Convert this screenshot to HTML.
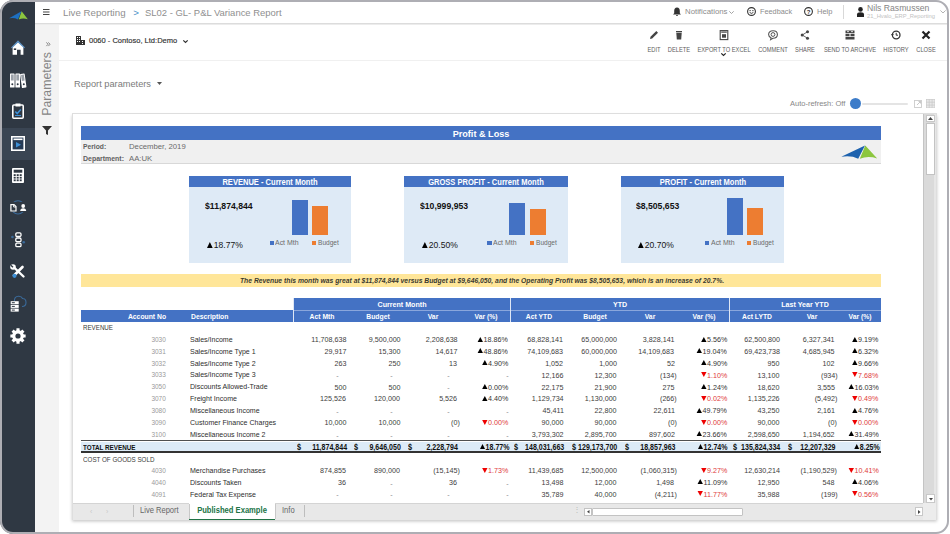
<!DOCTYPE html>
<html><head><meta charset="utf-8"><style>
html,body{margin:0;padding:0;width:950px;height:534px;overflow:hidden;background:#fff;font-family:"Liberation Sans", sans-serif;}
.t{position:absolute;white-space:nowrap;line-height:1;}
.b{position:absolute;}
svg{position:absolute;overflow:visible;}
#frame{position:absolute;left:0;top:0;width:949px;height:534px;border-radius:14px;overflow:hidden;background:#fff;}
#frameb{position:absolute;left:0px;top:-0.3px;width:949.4px;height:534.5px;border-radius:13px;border:2.1px solid #aeaeb4;box-sizing:border-box;}
</style></head><body>
<div id="frame">

<div class="b" style="left:0px;top:0px;width:35px;height:540px;background:#2f3843;"></div>
<div class="b" style="left:0px;top:128px;width:35px;height:32px;background:#3a4553;"></div>
<svg style="left:9.3px;top:10.6px" width="19" height="9" viewBox="0 0 19 9"><g transform="scale(0.52,0.62)"><path d="M0.3,11.8 L24,0.5 L17.2,13.7 Q10,10.2 0.3,11.8 Z" fill="#1d6fc0"/><path d="M18.8,13.7 L24.3,0.6 L36.2,13.4 Q27,10.5 18.8,13.7 Z" fill="#8cc63f"/></g></svg>
<svg style="left:11px;top:40px" width="14" height="16" viewBox="0 0 14 16"><polygon points="7,0.6 0.6,7.2 13.4,7.2" fill="#5b8dbd"/><path d="M1.6,6.6 L7,2.2 L12.4,6.6 V14.8 H9.6 V9.8 H6 V14.8 H1.6 Z" fill="#ffffff"/><rect x="2.8" y="8.4" width="2.4" height="1.6" fill="#2f3843"/><polygon points="7,0.6 0,7.4 0.9,8.2 7,2.6 13.1,8.2 14,7.4" fill="#5b8dbd"/></svg>
<svg style="left:10px;top:72.5px" width="17" height="15" viewBox="0 0 17 15"><rect x="0" y="0.5" width="4.6" height="14" rx="0.6" fill="#ffffff"/><rect x="5.4" y="0.5" width="4.6" height="14" rx="0.6" fill="#ffffff"/><g transform="rotate(-8 13 8)"><rect x="11" y="0.8" width="4.6" height="14" rx="0.6" fill="#ffffff"/></g><rect x="0.9" y="1.5" width="2.8" height="6" fill="#9aa0a8"/><rect x="6.3" y="1.5" width="2.8" height="6" fill="#9aa0a8"/><g transform="rotate(-8 13 8)"><rect x="11.9" y="1.8" width="2.8" height="6" fill="#9aa0a8"/></g><circle cx="2.3" cy="11.2" r="1" fill="#2f3843"/><circle cx="7.7" cy="11.2" r="1" fill="#2f3843"/><circle cx="13.8" cy="11.2" r="1" fill="#2f3843"/></svg>
<svg style="left:12px;top:103px" width="12" height="16" viewBox="0 0 12 16"><rect x="0.8" y="2" width="10.4" height="13.2" rx="1" fill="none" stroke="#ffffff" stroke-width="1.6"/><rect x="3.5" y="0.5" width="5" height="3" fill="#ffffff"/><path d="M3.3,8.5 L5.2,10.6 L8.8,6.5" fill="none" stroke="#3d8fd6" stroke-width="1.5"/><rect x="3" y="12" width="6" height="1" fill="#3d8fd6"/></svg>
<svg style="left:11px;top:136px" width="14" height="15" viewBox="0 0 14 15"><rect x="0.8" y="0.8" width="12.4" height="13.4" fill="#253a55" stroke="#ffffff" stroke-width="1.6"/><rect x="2.5" y="2.5" width="9" height="1.6" fill="#ffffff"/><polygon points="5,6 10,8.8 5,11.6" fill="#3d8fd6"/></svg>
<svg style="left:12px;top:168px" width="12" height="15" viewBox="0 0 12 15"><rect x="0" y="0" width="12" height="15" rx="1" fill="#ffffff"/><rect x="1.7" y="1.7" width="8.6" height="3" fill="#2f3843"/><rect x="1.7" y="6.2" width="2" height="1.8" fill="#2f3843"/><rect x="4.7" y="6.2" width="2" height="1.8" fill="#2f3843"/><rect x="7.7" y="6.2" width="2" height="1.8" fill="#2f3843"/><rect x="1.7" y="8.8" width="2" height="1.8" fill="#2f3843"/><rect x="4.7" y="8.8" width="2" height="1.8" fill="#2f3843"/><rect x="7.7" y="8.8" width="2" height="1.8" fill="#2f3843"/><rect x="1.7" y="11.4" width="2" height="1.8" fill="#2f3843"/><rect x="4.7" y="11.4" width="2" height="1.8" fill="#2f3843"/><rect x="7.7" y="11.4" width="2" height="1.8" fill="#2f3843"/></svg>
<svg style="left:8px;top:199px" width="20" height="17" viewBox="0 0 20 17"><circle cx="10" cy="8.4" r="6.6" fill="none" stroke="#3a6a9a" stroke-width="1.1"/><rect x="1" y="3" width="18" height="10" fill="#2f3843"/><path d="M2.9,5.6 H6 L8,7.6 V12 H2.9 Z" fill="none" stroke="#ffffff" stroke-width="1.2"/><path d="M5.6,5.6 V8 H8" fill="none" stroke="#ffffff" stroke-width="0.9"/><circle cx="15.2" cy="7" r="1.9" fill="#ffffff"/><path d="M12.2,12.1 Q12.2,9.2 15.2,9.2 Q18.2,9.2 18.2,12.1 Z" fill="#ffffff"/></svg>
<svg style="left:11px;top:232px" width="14" height="16" viewBox="0 0 14 16"><circle cx="1.4" cy="5" r="1.3" fill="#3a6a9a"/><circle cx="12.7" cy="10.2" r="1.3" fill="#3a6a9a"/><rect x="4.8" y="0.9" width="5.2" height="3.6" rx="1.2" fill="#2f3843" stroke="#ffffff" stroke-width="1.3"/><rect x="4.8" y="6" width="5.2" height="3.6" rx="1.2" fill="#2f3843" stroke="#ffffff" stroke-width="1.3"/><rect x="4.8" y="11.1" width="5.2" height="3.6" rx="1.2" fill="#2f3843" stroke="#ffffff" stroke-width="1.3"/></svg>
<svg style="left:9.5px;top:264px" width="17" height="15" viewBox="0 0 17 15"><path d="M4,11.5 L12.5,3" stroke="#ffffff" stroke-width="2.6" stroke-linecap="round"/><path d="M3,2.5 L13.5,12.5" stroke="#ffffff" stroke-width="2.4" stroke-linecap="round"/><circle cx="3" cy="3" r="2.8" fill="#ffffff"/><path d="M0.8,1.2 L3,3.2" stroke="#2f3843" stroke-width="1.4"/><circle cx="4.5" cy="11.8" r="2.1" fill="#3d8fd6"/></svg>
<svg style="left:10px;top:295px" width="17" height="18" viewBox="0 0 17 18"><path d="M4.5,6 Q4,1.5 8.5,1.2 Q11.5,1 12.5,3.5 Q16,3.5 16,7.5 Q16,11.5 12,11.5" fill="none" stroke="#3a6a9a" stroke-width="1.1"/><rect x="0.7" y="6" width="8.5" height="6.5" fill="#2f3843"/><rect x="0.7" y="6.2" width="8" height="3" fill="#ffffff"/><rect x="0.7" y="9.9" width="8" height="3" fill="#ffffff"/><rect x="0.7" y="13.6" width="8" height="3" fill="#ffffff"/><rect x="1.8" y="7.2" width="3" height="1" fill="#2f3843"/><rect x="1.8" y="10.9" width="3" height="1" fill="#2f3843"/><rect x="1.8" y="14.6" width="3" height="1" fill="#2f3843"/></svg>
<svg style="left:10.2px;top:328px" width="16" height="16" viewBox="0 0 16 16"><polygon points="13.38,6.45 15.64,6.45 15.64,9.55 13.38,9.55 12.90,10.71 14.50,12.31 12.31,14.50 10.71,12.90 9.55,13.38 9.55,15.64 6.45,15.64 6.45,13.38 5.29,12.90 3.69,14.50 1.50,12.31 3.10,10.71 2.62,9.55 0.36,9.55 0.36,6.45 2.62,6.45 3.10,5.29 1.50,3.69 3.69,1.50 5.29,3.10 6.45,2.62 6.45,0.36 9.55,0.36 9.55,2.62 10.71,3.10 12.31,1.50 14.50,3.69 12.90,5.29" fill="#ffffff"/><circle cx="8" cy="8" r="5.8" fill="#ffffff"/><circle cx="8" cy="8" r="2.6" fill="#2f3843"/></svg>
<div class="b" style="left:35px;top:24px;width:24px;height:520px;background:#f3f3f3;"></div>
<svg style="left:45.5px;top:41.5px" width="4.5" height="4.5" viewBox="0 0 4.5 4.5"><path d="M0.4,0.4 L2,2.25 L0.4,4.1 M2.4,0.4 L4,2.25 L2.4,4.1" fill="none" stroke="#888" stroke-width="1"/></svg>
<div class="t" style="left:47px;top:84px;font-size:12.3px;color:#858585;transform:translate(-50%,-50%) rotate(-90deg);transform-origin:50% 50%;">Parameters</div>
<svg style="left:42px;top:126px" width="10" height="9" viewBox="0 0 10 9"><path d="M0,0 H10 L6,4.5 V9 L4,8 V4.5 Z" fill="#333"/></svg>
<div class="b" style="left:35px;top:0px;width:913px;height:23px;background:#fff;"></div>
<div class="b" style="left:35px;top:23px;width:913px;height:1px;background:#dcdcdc;"></div>
<div class="b" style="left:35px;top:24px;width:913px;height:1px;background:#ececec;"></div>
<svg style="left:42.5px;top:8.5px" width="6.5" height="6" viewBox="0 0 6.5 6"><rect x="0" y="0" width="6.5" height="1" fill="#444"/><rect x="0" y="2.5" width="6.5" height="1" fill="#444"/><rect x="0" y="5" width="6.5" height="1" fill="#444"/></svg>
<div class="t" style="left:63.4px;top:7.6px;font-size:9.8px;color:#8f8f8f;transform:scaleX(0.99);transform-origin:left 50%;">Live Reporting</div>
<div class="t" style="left:133.3px;top:7.6px;font-size:9.7px;color:#4a90c8;">&gt;</div>
<div class="t" style="left:145.3px;top:7.6px;font-size:9.8px;color:#8f8f8f;transform:scaleX(0.965);transform-origin:left 50%;">SL02 - GL- P&amp;L Variance Report</div>
<svg style="left:673px;top:7px" width="8" height="9" viewBox="0 0 8 9"><path d="M4,0.5 Q6.8,0.8 6.8,4 V6.3 L8,7.5 H0 L1.2,6.3 V4 Q1.2,0.8 4,0.5 Z M3,8 H5 Q5,9 4,9 Q3,9 3,8Z" fill="#333"/></svg>
<div class="t" style="left:685px;top:8px;font-size:7.8px;color:#8c8c8c;">Notifications</div>
<svg style="left:729px;top:11px" width="5" height="3" viewBox="0 0 5 3"><path d="M0.3,0.3 L2.5,2.5 L4.7,0.3" fill="none" stroke="#999" stroke-width="0.9"/></svg>
<svg style="left:747px;top:7px" width="9" height="9" viewBox="0 0 9 9"><circle cx="4.5" cy="4.5" r="3.9" fill="none" stroke="#333" stroke-width="1.1"/><circle cx="3.1" cy="3.6" r="0.7" fill="#333"/><circle cx="5.9" cy="3.6" r="0.7" fill="#333"/><path d="M2.6,5.4 Q4.5,7.4 6.4,5.4" fill="none" stroke="#333" stroke-width="0.9"/></svg>
<div class="t" style="left:760px;top:8px;font-size:7.3px;color:#8c8c8c;">Feedback</div>
<svg style="left:804px;top:7px" width="9" height="9" viewBox="0 0 9 9"><circle cx="4.5" cy="4.5" r="3.9" fill="none" stroke="#333" stroke-width="1.1"/><text x="4.5" y="7" font-size="6" font-weight="bold" text-anchor="middle" fill="#333" font-family="Liberation Sans">?</text></svg>
<div class="t" style="left:817px;top:8px;font-size:7.5px;color:#8c8c8c;">Help</div>
<div class="b" style="left:843px;top:5px;width:1px;height:14px;background:#d8d8d8;"></div>
<svg style="left:857px;top:7px" width="7" height="10" viewBox="0 0 7 10"><circle cx="3.5" cy="2.4" r="2.3" fill="#222"/><path d="M0,10 V7.5 Q0,5.2 3.5,5.2 Q7,5.2 7,7.5 V10 Z" fill="#222"/></svg>
<div class="t" style="left:867px;top:4.3px;font-size:9.0px;color:#868686;transform:scaleX(0.96);transform-origin:left 50%;">Nils Rasmussen</div>
<div class="t" style="left:867px;top:14.2px;font-size:5.8px;color:#c2c2c2;">21_Hvalo_ERP_Reporting</div>
<svg style="left:940px;top:10px" width="6" height="4" viewBox="0 0 6 4"><path d="M0.4,0.4 L3,3 L5.6,0.4" fill="none" stroke="#aaa" stroke-width="0.9"/></svg>
<svg style="left:76px;top:36px" width="9" height="9" viewBox="0 0 9 9"><rect x="0" y="0" width="5" height="9" fill="#333"/><rect x="5" y="4" width="4" height="5" fill="#333"/><rect x="1" y="1" width="1" height="1" fill="#fff"/><rect x="3" y="1" width="1" height="1" fill="#fff"/><rect x="1" y="3" width="1" height="1" fill="#fff"/><rect x="3" y="3" width="1" height="1" fill="#fff"/><rect x="1" y="5" width="1" height="1" fill="#fff"/><rect x="3" y="5" width="1" height="1" fill="#fff"/><rect x="6" y="5" width="1" height="1" fill="#fff"/><rect x="6" y="7" width="1" height="1" fill="#fff"/></svg>
<div class="t" style="left:89.2px;top:36.6px;font-size:8.0px;color:#303030;transform:scaleX(0.94);transform-origin:left 50%;-webkit-text-stroke:0.15px #303030;">0060 - Contoso, Ltd:Demo</div>
<svg style="left:183px;top:40px" width="5" height="3" viewBox="0 0 5 3"><path d="M0.3,0.3 L2.5,2.5 L4.7,0.3" fill="none" stroke="#333" stroke-width="1.2"/></svg>
<svg style="left:649.0px;top:30px" width="10" height="10" viewBox="0 0 10 10"><path d="M1,9 L1.5,6.8 L7.3,1 L9,2.7 L3.2,8.5 Z" fill="#444"/></svg>
<div class="t" style="left:354px;width:600px;text-align:center;top:46.3px;font-size:7.0px;color:#606060;transform:scaleX(0.82);transform-origin:center 50%;">EDIT</div>
<svg style="left:674.0px;top:30px" width="10" height="10" viewBox="0 0 10 10"><rect x="2" y="1" width="6" height="1.2" fill="#444"/><path d="M2.3,2.8 H7.7 L7.2,9.5 H2.8 Z" fill="#444"/></svg>
<div class="t" style="left:379px;width:600px;text-align:center;top:46.3px;font-size:7.0px;color:#606060;transform:scaleX(0.82);transform-origin:center 50%;">DELETE</div>
<svg style="left:718.5px;top:30px" width="10" height="10" viewBox="0 0 10 10"><rect x="1.2" y="0.6" width="7.6" height="9" fill="none" stroke="#444" stroke-width="1.1"/><rect x="2.2" y="1.5" width="5.6" height="1.2" fill="#444"/><rect x="3" y="4.2" width="4" height="3.5" fill="#444"/></svg>
<div class="t" style="left:423.5px;width:600px;text-align:center;top:46.3px;font-size:7.0px;color:#606060;transform:scaleX(0.82);transform-origin:center 50%;">EXPORT TO EXCEL</div>
<svg style="left:721px;top:52.8px" width="5" height="3" viewBox="0 0 5 3"><path d="M0.3,0.3 L2.5,2.5 L4.7,0.3" fill="none" stroke="#222" stroke-width="1.2"/></svg>
<svg style="left:768.0px;top:30px" width="10" height="10" viewBox="0 0 10 10"><path d="M5,0.8 C8,0.8 9.4,2.6 9.4,4.5 C9.4,6.6 7.6,8.2 5,8.2 L2.6,9.6 L3,7.8 C1.6,7.1 0.6,6 0.6,4.5 C0.6,2.6 2,0.8 5,0.8 Z" fill="none" stroke="#555" stroke-width="1.1"/><circle cx="5" cy="4.5" r="1.9" fill="none" stroke="#555" stroke-width="1"/></svg>
<div class="t" style="left:473px;width:600px;text-align:center;top:46.3px;font-size:7.0px;color:#606060;transform:scaleX(0.82);transform-origin:center 50%;">COMMENT</div>
<svg style="left:800.0px;top:30px" width="10" height="10" viewBox="0 0 10 10"><circle cx="7.5" cy="1.8" r="1.5" fill="#444"/><circle cx="2.2" cy="5" r="1.5" fill="#444"/><circle cx="7.5" cy="8.2" r="1.5" fill="#444"/><path d="M7.5,1.8 L2.2,5 L7.5,8.2" fill="none" stroke="#444" stroke-width="0.8"/></svg>
<div class="t" style="left:505px;width:600px;text-align:center;top:46.3px;font-size:7.0px;color:#606060;transform:scaleX(0.82);transform-origin:center 50%;">SHARE</div>
<svg style="left:844.5px;top:30px" width="10" height="10" viewBox="0 0 10 10"><rect x="0.5" y="0.5" width="9" height="2.5" fill="#444"/><rect x="0.5" y="3.7" width="4" height="2.5" fill="#444"/><rect x="5.5" y="3.7" width="4" height="2.5" fill="#444"/><rect x="0.5" y="6.9" width="9" height="2.6" fill="#444"/><rect x="2" y="1.3" width="2" height="0.8" fill="#fff"/><rect x="6" y="1.3" width="2" height="0.8" fill="#fff"/></svg>
<div class="t" style="left:549.5px;width:600px;text-align:center;top:46.3px;font-size:7.0px;color:#606060;transform:scaleX(0.82);transform-origin:center 50%;">SEND TO ARCHIVE</div>
<svg style="left:891.0px;top:30px" width="10" height="10" viewBox="0 0 10 10"><circle cx="5.2" cy="5" r="3.8" fill="none" stroke="#333" stroke-width="1.3"/><path d="M5.2,2.8 V5.2 H7" fill="none" stroke="#333" stroke-width="1"/><polygon points="0,4 2.8,4 1.4,6.2" fill="#333"/></svg>
<div class="t" style="left:596px;width:600px;text-align:center;top:46.3px;font-size:7.0px;color:#606060;transform:scaleX(0.82);transform-origin:center 50%;">HISTORY</div>
<svg style="left:920.5px;top:30px" width="10" height="10" viewBox="0 0 10 10"><path d="M1.5,1.5 L8.5,8.5 M8.5,1.5 L1.5,8.5" stroke="#222" stroke-width="2.2"/></svg>
<div class="t" style="left:625.5px;width:600px;text-align:center;top:46.3px;font-size:7.0px;color:#606060;transform:scaleX(0.82);transform-origin:center 50%;">CLOSE</div>
<div class="b" style="left:59px;top:60px;width:889px;height:1px;background:#f0f0f0;"></div>
<div class="t" style="left:74.4px;top:78.9px;font-size:9.4px;color:#7b7b7b;transform:scaleX(0.985);transform-origin:left 50%;">Report parameters</div>
<svg style="left:157px;top:82px" width="5" height="3" viewBox="0 0 5 3"><polygon points="0,0 5,0 2.5,3" fill="#555"/></svg>
<div class="t" style="left:790px;top:99.5px;font-size:7.5px;color:#888;">Auto-refresh: Off</div>
<div class="b" style="left:862px;top:102.5px;width:46px;height:2px;background:#e4e4e4;border-radius:1px;"></div>
<div class="b" style="left:849.5px;top:97.5px;width:11.5px;height:11.5px;background:#3d7cc9;border-radius:50%;"></div>
<svg style="left:913.5px;top:99.5px" width="8" height="8" viewBox="0 0 8 8"><rect x="0.5" y="0.5" width="7" height="7" fill="none" stroke="#ccc" stroke-width="0.9"/><path d="M3,5 L6.5,1.5 M4.5,1.5 H6.5 V3.5" fill="none" stroke="#bbb" stroke-width="0.8"/></svg>
<svg style="left:926px;top:99px" width="9" height="9" viewBox="0 0 9 9"><rect x="0" y="0" width="9" height="9" fill="#c8c8c8"/><rect x="0.6" y="0.6" width="2.2" height="2.2" fill="#e8e8e8"/><rect x="3.5" y="0.6" width="2.2" height="2.2" fill="#e8e8e8"/><rect x="6.3999999999999995" y="0.6" width="2.2" height="2.2" fill="#e8e8e8"/><rect x="0.6" y="3.5" width="2.2" height="2.2" fill="#e8e8e8"/><rect x="3.5" y="3.5" width="2.2" height="2.2" fill="#e8e8e8"/><rect x="6.3999999999999995" y="3.5" width="2.2" height="2.2" fill="#e8e8e8"/><rect x="0.6" y="6.3999999999999995" width="2.2" height="2.2" fill="#e8e8e8"/><rect x="3.5" y="6.3999999999999995" width="2.2" height="2.2" fill="#e8e8e8"/><rect x="6.3999999999999995" y="6.3999999999999995" width="2.2" height="2.2" fill="#e8e8e8"/></svg>
<div class="b" style="left:72px;top:113px;width:865px;height:407px;background:#fff;border:1px solid #dedede;box-sizing:border-box;box-shadow:0 1.5px 3px rgba(0,0,0,0.22);"></div>
<div class="b" style="left:81px;top:125.5px;width:800px;height:14.2px;background:#4472c4;"></div>
<div class="t" style="left:181.2px;width:600px;text-align:center;top:128.8px;font-size:9.8px;color:#fff;transform:scaleX(0.93);transform-origin:center 50%;font-weight:bold;">Profit &amp; Loss</div>
<div class="b" style="left:81px;top:139.7px;width:800px;height:24px;background:#f0f0f0;border-bottom:1px solid #d8d8d8;box-sizing:border-box;"></div>
<div class="t" style="left:82.6px;top:143.2px;font-size:8.1px;color:#5f5f5f;transform:scaleX(0.83);transform-origin:left 50%;font-weight:bold;">Period:</div>
<div class="t" style="left:82.6px;top:155.0px;font-size:8.1px;color:#5f5f5f;transform:scaleX(0.86);transform-origin:left 50%;font-weight:bold;">Department:</div>
<div class="t" style="left:128.5px;top:143.2px;font-size:8.1px;color:#6a6a6a;transform:scaleX(0.955);transform-origin:left 50%;">December, 2019</div>
<div class="t" style="left:128.5px;top:155.0px;font-size:8.1px;color:#6a6a6a;transform:scaleX(0.955);transform-origin:left 50%;">AA:UK</div>
<svg style="left:841px;top:144.5px" width="37" height="14" viewBox="0 0 37 14"><path d="M0.3,11.8 L24,0.5 L17.2,13.7 Q10,10.2 0.3,11.8 Z" fill="#1d62ae"/><path d="M18.8,13.7 L24.3,0.6 L36.2,13.4 Q27,10.5 18.8,13.7 Z" fill="#8cc63f"/></svg>
<div class="b" style="left:189.1px;top:175.6px;width:161.70000000000002px;height:11.8px;background:#4472c4;"></div>
<div class="b" style="left:189.1px;top:187.4px;width:161.70000000000002px;height:75.4px;background:#deeaf6;"></div>
<div class="t" style="left:-30.05000000000001px;width:600px;text-align:center;top:178.0px;font-size:8.5px;color:#fff;transform:scaleX(0.888);transform-origin:center 50%;font-weight:bold;">REVENUE - Current Month</div>
<div class="t" style="left:204.7px;top:202.0px;font-size:9.0px;color:#111;transform:scaleX(0.96);transform-origin:left 50%;font-weight:bold;">$11,874,844</div>
<div class="t" style="left:206.5px;top:240.8px;font-size:9.0px;color:#151515;transform:scaleX(0.95);transform-origin:left 50%;"><span style="display:inline-block;width:0;height:0;border-left:3.3px solid transparent;border-right:3.3px solid transparent;border-bottom:6.2px solid #000;margin-right:1.2px;vertical-align:0.3px;"></span>18.77%</div>
<div class="b" style="left:291.7px;top:199.6px;width:16px;height:35.20000000000002px;background:#4472c4;"></div>
<div class="b" style="left:312px;top:206.1px;width:16px;height:28.700000000000017px;background:#ed7d31;"></div>
<div class="b" style="left:269.5px;top:240.9px;width:4.4px;height:4.3px;background:#4472c4;"></div>
<div class="t" style="left:275.2px;top:238.5px;font-size:7.4px;color:#6a6a6a;transform:scaleX(0.94);transform-origin:left 50%;">Act Mth</div>
<div class="b" style="left:311.9px;top:240.9px;width:4.4px;height:4.3px;background:#ed7d31;"></div>
<div class="t" style="left:317.79999999999995px;top:238.5px;font-size:7.4px;color:#6a6a6a;transform:scaleX(0.89);transform-origin:left 50%;">Budget</div>
<div class="b" style="left:404.2px;top:175.6px;width:164.00000000000006px;height:11.8px;background:#4472c4;"></div>
<div class="b" style="left:404.2px;top:187.4px;width:164.00000000000006px;height:75.4px;background:#deeaf6;"></div>
<div class="t" style="left:186.20000000000005px;width:600px;text-align:center;top:178.0px;font-size:8.5px;color:#fff;transform:scaleX(0.888);transform-origin:center 50%;font-weight:bold;">GROSS PROFIT - Current Month</div>
<div class="t" style="left:419.9px;top:202.0px;font-size:9.0px;color:#111;transform:scaleX(0.96);transform-origin:left 50%;font-weight:bold;">$10,999,953</div>
<div class="t" style="left:421.8px;top:240.8px;font-size:9.0px;color:#151515;transform:scaleX(0.95);transform-origin:left 50%;"><span style="display:inline-block;width:0;height:0;border-left:3.3px solid transparent;border-right:3.3px solid transparent;border-bottom:6.2px solid #000;margin-right:1.2px;vertical-align:0.3px;"></span>20.50%</div>
<div class="b" style="left:508.5px;top:202.6px;width:16px;height:32.20000000000002px;background:#4472c4;"></div>
<div class="b" style="left:529.8px;top:209.4px;width:16px;height:25.400000000000006px;background:#ed7d31;"></div>
<div class="b" style="left:487.2px;top:240.9px;width:4.4px;height:4.3px;background:#4472c4;"></div>
<div class="t" style="left:492.9px;top:238.5px;font-size:7.4px;color:#6a6a6a;transform:scaleX(0.94);transform-origin:left 50%;">Act Mth</div>
<div class="b" style="left:529.6px;top:240.9px;width:4.4px;height:4.3px;background:#ed7d31;"></div>
<div class="t" style="left:535.5px;top:238.5px;font-size:7.4px;color:#6a6a6a;transform:scaleX(0.89);transform-origin:left 50%;">Budget</div>
<div class="b" style="left:621.1px;top:175.6px;width:162.89999999999998px;height:11.8px;background:#4472c4;"></div>
<div class="b" style="left:621.1px;top:187.4px;width:162.89999999999998px;height:75.4px;background:#deeaf6;"></div>
<div class="t" style="left:402.54999999999995px;width:600px;text-align:center;top:178.0px;font-size:8.5px;color:#fff;transform:scaleX(0.888);transform-origin:center 50%;font-weight:bold;">PROFIT - Current Month</div>
<div class="t" style="left:636.2px;top:202.0px;font-size:9.0px;color:#111;transform:scaleX(0.96);transform-origin:left 50%;font-weight:bold;">$8,505,653</div>
<div class="t" style="left:637.7px;top:240.8px;font-size:9.0px;color:#151515;transform:scaleX(0.95);transform-origin:left 50%;"><span style="display:inline-block;width:0;height:0;border-left:3.3px solid transparent;border-right:3.3px solid transparent;border-bottom:6.2px solid #000;margin-right:1.2px;vertical-align:0.3px;"></span>20.70%</div>
<div class="b" style="left:726.8px;top:197.9px;width:16px;height:36.900000000000006px;background:#4472c4;"></div>
<div class="b" style="left:747px;top:207.9px;width:16px;height:26.900000000000006px;background:#ed7d31;"></div>
<div class="b" style="left:705px;top:240.9px;width:4.4px;height:4.3px;background:#4472c4;"></div>
<div class="t" style="left:710.7px;top:238.5px;font-size:7.4px;color:#6a6a6a;transform:scaleX(0.94);transform-origin:left 50%;">Act Mth</div>
<div class="b" style="left:747px;top:240.9px;width:4.4px;height:4.3px;background:#ed7d31;"></div>
<div class="t" style="left:752.9px;top:238.5px;font-size:7.4px;color:#6a6a6a;transform:scaleX(0.89);transform-origin:left 50%;">Budget</div>
<div class="b" style="left:81px;top:273.9px;width:800px;height:12.7px;background:#ffe699;"></div>
<div class="t" style="left:181.7px;width:600px;text-align:center;top:277.0px;font-size:8.1px;color:#3b3a30;transform:scaleX(0.837);transform-origin:center 50%;font-weight:bold;font-style:italic;">The Revenue this month was great at $11,874,844 versus Budget at $9,646,050, and the Operating Profit was $8,505,653, which is an increase of 20.7%.</div>
<div class="b" style="left:293.5px;top:298.3px;width:587px;height:11.5px;background:#4472c4;"></div>
<div class="b" style="left:81px;top:309.8px;width:800px;height:12px;background:#4472c4;"></div>
<div class="b" style="left:293.5px;top:309.6px;width:587px;height:0.8px;background:#8aa6dc;"></div>
<div class="b" style="left:293px;top:298.3px;width:0.9px;height:23.5px;background:#dfe7f5;"></div>
<div class="b" style="left:510.2px;top:298.3px;width:0.9px;height:23.5px;background:#dfe7f5;"></div>
<div class="b" style="left:729.2px;top:298.3px;width:0.9px;height:23.5px;background:#dfe7f5;"></div>
<div class="t" style="left:102px;width:600px;text-align:center;top:300.8px;font-size:7.7px;color:#fff;transform:scaleX(0.925);transform-origin:center 50%;font-weight:bold;">Current Month</div>
<div class="t" style="left:319.5px;width:600px;text-align:center;top:300.8px;font-size:7.7px;color:#fff;transform:scaleX(0.925);transform-origin:center 50%;font-weight:bold;">YTD</div>
<div class="t" style="left:504.70000000000005px;width:600px;text-align:center;top:300.8px;font-size:7.7px;color:#fff;transform:scaleX(0.925);transform-origin:center 50%;font-weight:bold;">Last Year YTD</div>
<div class="t" style="left:-153px;width:600px;text-align:center;top:312.6px;font-size:8.0px;color:#fff;transform:scaleX(0.85);transform-origin:center 50%;font-weight:bold;">Account No</div>
<div class="t" style="left:190.5px;top:312.6px;font-size:8.0px;color:#fff;transform:scaleX(0.85);transform-origin:left 50%;font-weight:bold;">Description</div>
<div class="t" style="left:22px;width:600px;text-align:center;top:312.6px;font-size:8.0px;color:#fff;transform:scaleX(0.85);transform-origin:center 50%;font-weight:bold;">Act Mth</div>
<div class="t" style="left:77.5px;width:600px;text-align:center;top:312.6px;font-size:8.0px;color:#fff;transform:scaleX(0.85);transform-origin:center 50%;font-weight:bold;">Budget</div>
<div class="t" style="left:132.7px;width:600px;text-align:center;top:312.6px;font-size:8.0px;color:#fff;transform:scaleX(0.85);transform-origin:center 50%;font-weight:bold;">Var</div>
<div class="t" style="left:186px;width:600px;text-align:center;top:312.6px;font-size:8.0px;color:#fff;transform:scaleX(0.85);transform-origin:center 50%;font-weight:bold;">Var (%)</div>
<div class="t" style="left:239.39999999999998px;width:600px;text-align:center;top:312.6px;font-size:8.0px;color:#fff;transform:scaleX(0.85);transform-origin:center 50%;font-weight:bold;">Act YTD</div>
<div class="t" style="left:294.70000000000005px;width:600px;text-align:center;top:312.6px;font-size:8.0px;color:#fff;transform:scaleX(0.85);transform-origin:center 50%;font-weight:bold;">Budget</div>
<div class="t" style="left:350.29999999999995px;width:600px;text-align:center;top:312.6px;font-size:8.0px;color:#fff;transform:scaleX(0.85);transform-origin:center 50%;font-weight:bold;">Var</div>
<div class="t" style="left:404.29999999999995px;width:600px;text-align:center;top:312.6px;font-size:8.0px;color:#fff;transform:scaleX(0.85);transform-origin:center 50%;font-weight:bold;">Var (%)</div>
<div class="t" style="left:456.5px;width:600px;text-align:center;top:312.6px;font-size:8.0px;color:#fff;transform:scaleX(0.85);transform-origin:center 50%;font-weight:bold;">Act LYTD</div>
<div class="t" style="left:511.70000000000005px;width:600px;text-align:center;top:312.6px;font-size:8.0px;color:#fff;transform:scaleX(0.85);transform-origin:center 50%;font-weight:bold;">Var</div>
<div class="t" style="left:560px;width:600px;text-align:center;top:312.6px;font-size:8.0px;color:#fff;transform:scaleX(0.85);transform-origin:center 50%;font-weight:bold;">Var (%)</div>
<div class="t" style="left:82.5px;top:324.1px;font-size:7.4px;color:#3a3a3a;transform:scaleX(0.8385135135135134);transform-origin:left 50%;">REVENUE</div>
<div class="t" style="right:782.9px;top:335.8px;font-size:8.0px;color:#9a9a9a;transform:scaleX(0.81);transform-origin:right 50%;">3030</div>
<div class="t" style="left:190.3px;top:335.8px;font-size:8.0px;color:#2e2e2e;transform:scaleX(0.88);transform-origin:left 50%;">Sales/Income</div>
<div class="t" style="right:602.9000000000001px;top:336.15px;font-size:8.0px;color:#3d3d3d;transform:scaleX(0.893);transform-origin:right 50%;">11,708,638</div>
<div class="t" style="right:548.8px;top:336.15px;font-size:8.0px;color:#3d3d3d;transform:scaleX(0.893);transform-origin:right 50%;">9,500,000</div>
<div class="t" style="right:491.90000000000003px;top:336.15px;font-size:8.0px;color:#3d3d3d;transform:scaleX(0.893);transform-origin:right 50%;">2,208,638</div>
<div class="t" style="right:440.7px;top:336.15px;font-size:8.0px;color:#333;transform:scaleX(0.893);transform-origin:right 50%;"><span style="display:inline-block;width:0;height:0;border-left:3.1px solid transparent;border-right:3.1px solid transparent;border-bottom:5.4px solid #000;margin-right:0.7px;vertical-align:0.6px;"></span>18.86%</div>
<div class="t" style="right:385.5999999999999px;top:336.15px;font-size:8.0px;color:#3d3d3d;transform:scaleX(0.893);transform-origin:right 50%;">68,828,141</div>
<div class="t" style="right:332.29999999999995px;top:336.15px;font-size:8.0px;color:#3d3d3d;transform:scaleX(0.893);transform-origin:right 50%;">65,000,000</div>
<div class="t" style="right:274.5px;top:336.15px;font-size:8.0px;color:#3d3d3d;transform:scaleX(0.893);transform-origin:right 50%;">3,828,141</div>
<div class="t" style="right:221.89999999999998px;top:336.15px;font-size:8.0px;color:#333;transform:scaleX(0.893);transform-origin:right 50%;"><span style="display:inline-block;width:0;height:0;border-left:3.1px solid transparent;border-right:3.1px solid transparent;border-bottom:5.4px solid #000;margin-right:0.7px;vertical-align:0.6px;"></span>5.56%</div>
<div class="t" style="right:169.29999999999995px;top:336.15px;font-size:8.0px;color:#3d3d3d;transform:scaleX(0.893);transform-origin:right 50%;">62,500,800</div>
<div class="t" style="right:114.29999999999995px;top:336.15px;font-size:8.0px;color:#3d3d3d;transform:scaleX(0.893);transform-origin:right 50%;">6,327,341</div>
<div class="t" style="right:70.5px;top:336.15px;font-size:8.0px;color:#333;transform:scaleX(0.893);transform-origin:right 50%;"><span style="display:inline-block;width:0;height:0;border-left:3.1px solid transparent;border-right:3.1px solid transparent;border-bottom:5.4px solid #000;margin-right:0.7px;vertical-align:0.6px;"></span>9.19%</div>
<div class="t" style="right:782.9px;top:347.65000000000003px;font-size:8.0px;color:#9a9a9a;transform:scaleX(0.81);transform-origin:right 50%;">3031</div>
<div class="t" style="left:190.3px;top:347.65000000000003px;font-size:8.0px;color:#2e2e2e;transform:scaleX(0.88);transform-origin:left 50%;">Sales/Income Type 1</div>
<div class="t" style="right:602.9000000000001px;top:348.0px;font-size:8.0px;color:#3d3d3d;transform:scaleX(0.893);transform-origin:right 50%;">29,917</div>
<div class="t" style="right:548.8px;top:348.0px;font-size:8.0px;color:#3d3d3d;transform:scaleX(0.893);transform-origin:right 50%;">15,300</div>
<div class="t" style="right:491.90000000000003px;top:348.0px;font-size:8.0px;color:#3d3d3d;transform:scaleX(0.893);transform-origin:right 50%;">14,617</div>
<div class="t" style="right:440.7px;top:348.0px;font-size:8.0px;color:#333;transform:scaleX(0.893);transform-origin:right 50%;"><span style="display:inline-block;width:0;height:0;border-left:3.1px solid transparent;border-right:3.1px solid transparent;border-bottom:5.4px solid #000;margin-right:0.7px;vertical-align:0.6px;"></span>48.86%</div>
<div class="t" style="right:385.5999999999999px;top:348.0px;font-size:8.0px;color:#3d3d3d;transform:scaleX(0.893);transform-origin:right 50%;">74,109,683</div>
<div class="t" style="right:332.29999999999995px;top:348.0px;font-size:8.0px;color:#3d3d3d;transform:scaleX(0.893);transform-origin:right 50%;">60,000,000</div>
<div class="t" style="right:274.5px;top:348.0px;font-size:8.0px;color:#3d3d3d;transform:scaleX(0.893);transform-origin:right 50%;">14,109,683</div>
<div class="t" style="right:221.89999999999998px;top:348.0px;font-size:8.0px;color:#333;transform:scaleX(0.893);transform-origin:right 50%;"><span style="display:inline-block;width:0;height:0;border-left:3.1px solid transparent;border-right:3.1px solid transparent;border-bottom:5.4px solid #000;margin-right:0.7px;vertical-align:0.6px;"></span>19.04%</div>
<div class="t" style="right:169.29999999999995px;top:348.0px;font-size:8.0px;color:#3d3d3d;transform:scaleX(0.893);transform-origin:right 50%;">69,423,738</div>
<div class="t" style="right:114.29999999999995px;top:348.0px;font-size:8.0px;color:#3d3d3d;transform:scaleX(0.893);transform-origin:right 50%;">4,685,945</div>
<div class="t" style="right:70.5px;top:348.0px;font-size:8.0px;color:#333;transform:scaleX(0.893);transform-origin:right 50%;"><span style="display:inline-block;width:0;height:0;border-left:3.1px solid transparent;border-right:3.1px solid transparent;border-bottom:5.4px solid #000;margin-right:0.7px;vertical-align:0.6px;"></span>6.32%</div>
<div class="t" style="right:782.9px;top:359.5px;font-size:8.0px;color:#9a9a9a;transform:scaleX(0.81);transform-origin:right 50%;">3032</div>
<div class="t" style="left:190.3px;top:359.5px;font-size:8.0px;color:#2e2e2e;transform:scaleX(0.88);transform-origin:left 50%;">Sales/Income Type 2</div>
<div class="t" style="right:602.9000000000001px;top:359.84999999999997px;font-size:8.0px;color:#3d3d3d;transform:scaleX(0.893);transform-origin:right 50%;">263</div>
<div class="t" style="right:548.8px;top:359.84999999999997px;font-size:8.0px;color:#3d3d3d;transform:scaleX(0.893);transform-origin:right 50%;">250</div>
<div class="t" style="right:491.90000000000003px;top:359.84999999999997px;font-size:8.0px;color:#3d3d3d;transform:scaleX(0.893);transform-origin:right 50%;">13</div>
<div class="t" style="right:440.7px;top:359.84999999999997px;font-size:8.0px;color:#333;transform:scaleX(0.893);transform-origin:right 50%;"><span style="display:inline-block;width:0;height:0;border-left:3.1px solid transparent;border-right:3.1px solid transparent;border-bottom:5.4px solid #000;margin-right:0.7px;vertical-align:0.6px;"></span>4.90%</div>
<div class="t" style="right:385.5999999999999px;top:359.84999999999997px;font-size:8.0px;color:#3d3d3d;transform:scaleX(0.893);transform-origin:right 50%;">1,052</div>
<div class="t" style="right:332.29999999999995px;top:359.84999999999997px;font-size:8.0px;color:#3d3d3d;transform:scaleX(0.893);transform-origin:right 50%;">1,000</div>
<div class="t" style="right:274.5px;top:359.84999999999997px;font-size:8.0px;color:#3d3d3d;transform:scaleX(0.893);transform-origin:right 50%;">52</div>
<div class="t" style="right:221.89999999999998px;top:359.84999999999997px;font-size:8.0px;color:#333;transform:scaleX(0.893);transform-origin:right 50%;"><span style="display:inline-block;width:0;height:0;border-left:3.1px solid transparent;border-right:3.1px solid transparent;border-bottom:5.4px solid #000;margin-right:0.7px;vertical-align:0.6px;"></span>4.90%</div>
<div class="t" style="right:169.29999999999995px;top:359.84999999999997px;font-size:8.0px;color:#3d3d3d;transform:scaleX(0.893);transform-origin:right 50%;">950</div>
<div class="t" style="right:114.29999999999995px;top:359.84999999999997px;font-size:8.0px;color:#3d3d3d;transform:scaleX(0.893);transform-origin:right 50%;">102</div>
<div class="t" style="right:70.5px;top:359.84999999999997px;font-size:8.0px;color:#333;transform:scaleX(0.893);transform-origin:right 50%;"><span style="display:inline-block;width:0;height:0;border-left:3.1px solid transparent;border-right:3.1px solid transparent;border-bottom:5.4px solid #000;margin-right:0.7px;vertical-align:0.6px;"></span>9.66%</div>
<div class="t" style="right:782.9px;top:371.35px;font-size:8.0px;color:#9a9a9a;transform:scaleX(0.81);transform-origin:right 50%;">3033</div>
<div class="t" style="left:190.3px;top:371.35px;font-size:8.0px;color:#2e2e2e;transform:scaleX(0.88);transform-origin:left 50%;">Sales/Income Type 3</div>
<div class="t" style="right:610.4000000000001px;top:372.3px;font-size:8.0px;color:#888;transform:scaleX(0.893);transform-origin:right 50%;">-</div>
<div class="t" style="right:556.3px;top:372.3px;font-size:8.0px;color:#888;transform:scaleX(0.893);transform-origin:right 50%;">-</div>
<div class="t" style="right:499.40000000000003px;top:372.3px;font-size:8.0px;color:#888;transform:scaleX(0.893);transform-origin:right 50%;">-</div>
<div class="t" style="right:440.7px;top:372.3px;font-size:8.0px;color:#888;transform:scaleX(0.893);transform-origin:right 50%;">-</div>
<div class="t" style="right:385.5999999999999px;top:371.7px;font-size:8.0px;color:#3d3d3d;transform:scaleX(0.893);transform-origin:right 50%;">12,166</div>
<div class="t" style="right:332.29999999999995px;top:371.7px;font-size:8.0px;color:#3d3d3d;transform:scaleX(0.893);transform-origin:right 50%;">12,300</div>
<div class="t" style="right:272.0px;top:371.7px;font-size:8.0px;color:#3d3d3d;transform:scaleX(0.893);transform-origin:right 50%;">(134)</div>
<div class="t" style="right:221.89999999999998px;top:371.7px;font-size:8.0px;color:#e03a3a;transform:scaleX(0.893);transform-origin:right 50%;"><span style="display:inline-block;width:0;height:0;border-left:3.1px solid transparent;border-right:3.1px solid transparent;border-top:5.4px solid #e00;margin-right:0.7px;vertical-align:0.6px;"></span>1.10%</div>
<div class="t" style="right:169.29999999999995px;top:371.7px;font-size:8.0px;color:#3d3d3d;transform:scaleX(0.893);transform-origin:right 50%;">13,100</div>
<div class="t" style="right:111.79999999999995px;top:371.7px;font-size:8.0px;color:#3d3d3d;transform:scaleX(0.893);transform-origin:right 50%;">(934)</div>
<div class="t" style="right:70.5px;top:371.7px;font-size:8.0px;color:#e03a3a;transform:scaleX(0.893);transform-origin:right 50%;"><span style="display:inline-block;width:0;height:0;border-left:3.1px solid transparent;border-right:3.1px solid transparent;border-top:5.4px solid #e00;margin-right:0.7px;vertical-align:0.6px;"></span>7.68%</div>
<div class="t" style="right:782.9px;top:383.2px;font-size:8.0px;color:#9a9a9a;transform:scaleX(0.81);transform-origin:right 50%;">3050</div>
<div class="t" style="left:190.3px;top:383.2px;font-size:8.0px;color:#2e2e2e;transform:scaleX(0.88);transform-origin:left 50%;">Discounts Allowed-Trade</div>
<div class="t" style="right:602.9000000000001px;top:383.54999999999995px;font-size:8.0px;color:#3d3d3d;transform:scaleX(0.893);transform-origin:right 50%;">500</div>
<div class="t" style="right:548.8px;top:383.54999999999995px;font-size:8.0px;color:#3d3d3d;transform:scaleX(0.893);transform-origin:right 50%;">500</div>
<div class="t" style="right:499.40000000000003px;top:384.15px;font-size:8.0px;color:#888;transform:scaleX(0.893);transform-origin:right 50%;">-</div>
<div class="t" style="right:440.7px;top:383.54999999999995px;font-size:8.0px;color:#333;transform:scaleX(0.893);transform-origin:right 50%;"><span style="display:inline-block;width:0;height:0;border-left:3.1px solid transparent;border-right:3.1px solid transparent;border-bottom:5.4px solid #000;margin-right:0.7px;vertical-align:0.6px;"></span>0.00%</div>
<div class="t" style="right:385.5999999999999px;top:383.54999999999995px;font-size:8.0px;color:#3d3d3d;transform:scaleX(0.893);transform-origin:right 50%;">22,175</div>
<div class="t" style="right:332.29999999999995px;top:383.54999999999995px;font-size:8.0px;color:#3d3d3d;transform:scaleX(0.893);transform-origin:right 50%;">21,900</div>
<div class="t" style="right:274.5px;top:383.54999999999995px;font-size:8.0px;color:#3d3d3d;transform:scaleX(0.893);transform-origin:right 50%;">275</div>
<div class="t" style="right:221.89999999999998px;top:383.54999999999995px;font-size:8.0px;color:#333;transform:scaleX(0.893);transform-origin:right 50%;"><span style="display:inline-block;width:0;height:0;border-left:3.1px solid transparent;border-right:3.1px solid transparent;border-bottom:5.4px solid #000;margin-right:0.7px;vertical-align:0.6px;"></span>1.24%</div>
<div class="t" style="right:169.29999999999995px;top:383.54999999999995px;font-size:8.0px;color:#3d3d3d;transform:scaleX(0.893);transform-origin:right 50%;">18,620</div>
<div class="t" style="right:114.29999999999995px;top:383.54999999999995px;font-size:8.0px;color:#3d3d3d;transform:scaleX(0.893);transform-origin:right 50%;">3,555</div>
<div class="t" style="right:70.5px;top:383.54999999999995px;font-size:8.0px;color:#333;transform:scaleX(0.893);transform-origin:right 50%;"><span style="display:inline-block;width:0;height:0;border-left:3.1px solid transparent;border-right:3.1px solid transparent;border-bottom:5.4px solid #000;margin-right:0.7px;vertical-align:0.6px;"></span>16.03%</div>
<div class="t" style="right:782.9px;top:395.05px;font-size:8.0px;color:#9a9a9a;transform:scaleX(0.81);transform-origin:right 50%;">3070</div>
<div class="t" style="left:190.3px;top:395.05px;font-size:8.0px;color:#2e2e2e;transform:scaleX(0.88);transform-origin:left 50%;">Freight Income</div>
<div class="t" style="right:602.9000000000001px;top:395.4px;font-size:8.0px;color:#3d3d3d;transform:scaleX(0.893);transform-origin:right 50%;">125,526</div>
<div class="t" style="right:548.8px;top:395.4px;font-size:8.0px;color:#3d3d3d;transform:scaleX(0.893);transform-origin:right 50%;">120,000</div>
<div class="t" style="right:491.90000000000003px;top:395.4px;font-size:8.0px;color:#3d3d3d;transform:scaleX(0.893);transform-origin:right 50%;">5,526</div>
<div class="t" style="right:440.7px;top:395.4px;font-size:8.0px;color:#333;transform:scaleX(0.893);transform-origin:right 50%;"><span style="display:inline-block;width:0;height:0;border-left:3.1px solid transparent;border-right:3.1px solid transparent;border-bottom:5.4px solid #000;margin-right:0.7px;vertical-align:0.6px;"></span>4.40%</div>
<div class="t" style="right:385.5999999999999px;top:395.4px;font-size:8.0px;color:#3d3d3d;transform:scaleX(0.893);transform-origin:right 50%;">1,129,734</div>
<div class="t" style="right:332.29999999999995px;top:395.4px;font-size:8.0px;color:#3d3d3d;transform:scaleX(0.893);transform-origin:right 50%;">1,130,000</div>
<div class="t" style="right:272.0px;top:395.4px;font-size:8.0px;color:#3d3d3d;transform:scaleX(0.893);transform-origin:right 50%;">(266)</div>
<div class="t" style="right:221.89999999999998px;top:395.4px;font-size:8.0px;color:#e03a3a;transform:scaleX(0.893);transform-origin:right 50%;"><span style="display:inline-block;width:0;height:0;border-left:3.1px solid transparent;border-right:3.1px solid transparent;border-top:5.4px solid #e00;margin-right:0.7px;vertical-align:0.6px;"></span>0.02%</div>
<div class="t" style="right:169.29999999999995px;top:395.4px;font-size:8.0px;color:#3d3d3d;transform:scaleX(0.893);transform-origin:right 50%;">1,135,226</div>
<div class="t" style="right:111.79999999999995px;top:395.4px;font-size:8.0px;color:#3d3d3d;transform:scaleX(0.893);transform-origin:right 50%;">(5,492)</div>
<div class="t" style="right:70.5px;top:395.4px;font-size:8.0px;color:#e03a3a;transform:scaleX(0.893);transform-origin:right 50%;"><span style="display:inline-block;width:0;height:0;border-left:3.1px solid transparent;border-right:3.1px solid transparent;border-top:5.4px solid #e00;margin-right:0.7px;vertical-align:0.6px;"></span>0.49%</div>
<div class="t" style="right:782.9px;top:406.9px;font-size:8.0px;color:#9a9a9a;transform:scaleX(0.81);transform-origin:right 50%;">3080</div>
<div class="t" style="left:190.3px;top:406.9px;font-size:8.0px;color:#2e2e2e;transform:scaleX(0.88);transform-origin:left 50%;">Miscellaneous Income</div>
<div class="t" style="right:610.4000000000001px;top:407.84999999999997px;font-size:8.0px;color:#888;transform:scaleX(0.893);transform-origin:right 50%;">-</div>
<div class="t" style="right:556.3px;top:407.84999999999997px;font-size:8.0px;color:#888;transform:scaleX(0.893);transform-origin:right 50%;">-</div>
<div class="t" style="right:499.40000000000003px;top:407.84999999999997px;font-size:8.0px;color:#888;transform:scaleX(0.893);transform-origin:right 50%;">-</div>
<div class="t" style="right:440.7px;top:407.84999999999997px;font-size:8.0px;color:#888;transform:scaleX(0.893);transform-origin:right 50%;">-</div>
<div class="t" style="right:385.5999999999999px;top:407.24999999999994px;font-size:8.0px;color:#3d3d3d;transform:scaleX(0.893);transform-origin:right 50%;">45,411</div>
<div class="t" style="right:332.29999999999995px;top:407.24999999999994px;font-size:8.0px;color:#3d3d3d;transform:scaleX(0.893);transform-origin:right 50%;">22,800</div>
<div class="t" style="right:274.5px;top:407.24999999999994px;font-size:8.0px;color:#3d3d3d;transform:scaleX(0.893);transform-origin:right 50%;">22,611</div>
<div class="t" style="right:221.89999999999998px;top:407.24999999999994px;font-size:8.0px;color:#333;transform:scaleX(0.893);transform-origin:right 50%;"><span style="display:inline-block;width:0;height:0;border-left:3.1px solid transparent;border-right:3.1px solid transparent;border-bottom:5.4px solid #000;margin-right:0.7px;vertical-align:0.6px;"></span>49.79%</div>
<div class="t" style="right:169.29999999999995px;top:407.24999999999994px;font-size:8.0px;color:#3d3d3d;transform:scaleX(0.893);transform-origin:right 50%;">43,250</div>
<div class="t" style="right:114.29999999999995px;top:407.24999999999994px;font-size:8.0px;color:#3d3d3d;transform:scaleX(0.893);transform-origin:right 50%;">2,161</div>
<div class="t" style="right:70.5px;top:407.24999999999994px;font-size:8.0px;color:#333;transform:scaleX(0.893);transform-origin:right 50%;"><span style="display:inline-block;width:0;height:0;border-left:3.1px solid transparent;border-right:3.1px solid transparent;border-bottom:5.4px solid #000;margin-right:0.7px;vertical-align:0.6px;"></span>4.76%</div>
<div class="t" style="right:782.9px;top:418.75px;font-size:8.0px;color:#9a9a9a;transform:scaleX(0.81);transform-origin:right 50%;">3090</div>
<div class="t" style="left:190.3px;top:418.75px;font-size:8.0px;color:#2e2e2e;transform:scaleX(0.88);transform-origin:left 50%;">Customer Finance Charges</div>
<div class="t" style="right:602.9000000000001px;top:419.09999999999997px;font-size:8.0px;color:#3d3d3d;transform:scaleX(0.893);transform-origin:right 50%;">10,000</div>
<div class="t" style="right:548.8px;top:419.09999999999997px;font-size:8.0px;color:#3d3d3d;transform:scaleX(0.893);transform-origin:right 50%;">10,000</div>
<div class="t" style="right:489.40000000000003px;top:419.09999999999997px;font-size:8.0px;color:#3d3d3d;transform:scaleX(0.893);transform-origin:right 50%;">(0)</div>
<div class="t" style="right:440.7px;top:419.09999999999997px;font-size:8.0px;color:#e03a3a;transform:scaleX(0.893);transform-origin:right 50%;"><span style="display:inline-block;width:0;height:0;border-left:3.1px solid transparent;border-right:3.1px solid transparent;border-top:5.4px solid #e00;margin-right:0.7px;vertical-align:0.6px;"></span>0.00%</div>
<div class="t" style="right:385.5999999999999px;top:419.09999999999997px;font-size:8.0px;color:#3d3d3d;transform:scaleX(0.893);transform-origin:right 50%;">90,000</div>
<div class="t" style="right:332.29999999999995px;top:419.09999999999997px;font-size:8.0px;color:#3d3d3d;transform:scaleX(0.893);transform-origin:right 50%;">90,000</div>
<div class="t" style="right:272.0px;top:419.09999999999997px;font-size:8.0px;color:#3d3d3d;transform:scaleX(0.893);transform-origin:right 50%;">(0)</div>
<div class="t" style="right:221.89999999999998px;top:419.09999999999997px;font-size:8.0px;color:#e03a3a;transform:scaleX(0.893);transform-origin:right 50%;"><span style="display:inline-block;width:0;height:0;border-left:3.1px solid transparent;border-right:3.1px solid transparent;border-top:5.4px solid #e00;margin-right:0.7px;vertical-align:0.6px;"></span>0.00%</div>
<div class="t" style="right:169.29999999999995px;top:419.09999999999997px;font-size:8.0px;color:#3d3d3d;transform:scaleX(0.893);transform-origin:right 50%;">90,000</div>
<div class="t" style="right:111.79999999999995px;top:419.09999999999997px;font-size:8.0px;color:#3d3d3d;transform:scaleX(0.893);transform-origin:right 50%;">(0)</div>
<div class="t" style="right:70.5px;top:419.09999999999997px;font-size:8.0px;color:#e03a3a;transform:scaleX(0.893);transform-origin:right 50%;"><span style="display:inline-block;width:0;height:0;border-left:3.1px solid transparent;border-right:3.1px solid transparent;border-top:5.4px solid #e00;margin-right:0.7px;vertical-align:0.6px;"></span>0.00%</div>
<div class="t" style="right:782.9px;top:430.6px;font-size:8.0px;color:#9a9a9a;transform:scaleX(0.81);transform-origin:right 50%;">3100</div>
<div class="t" style="left:190.3px;top:430.6px;font-size:8.0px;color:#2e2e2e;transform:scaleX(0.88);transform-origin:left 50%;">Miscellaneous Income 2</div>
<div class="t" style="right:610.4000000000001px;top:431.55px;font-size:8.0px;color:#888;transform:scaleX(0.893);transform-origin:right 50%;">-</div>
<div class="t" style="right:556.3px;top:431.55px;font-size:8.0px;color:#888;transform:scaleX(0.893);transform-origin:right 50%;">-</div>
<div class="t" style="right:499.40000000000003px;top:431.55px;font-size:8.0px;color:#888;transform:scaleX(0.893);transform-origin:right 50%;">-</div>
<div class="t" style="right:440.7px;top:431.55px;font-size:8.0px;color:#888;transform:scaleX(0.893);transform-origin:right 50%;">-</div>
<div class="t" style="right:385.5999999999999px;top:430.95px;font-size:8.0px;color:#3d3d3d;transform:scaleX(0.893);transform-origin:right 50%;">3,793,302</div>
<div class="t" style="right:332.29999999999995px;top:430.95px;font-size:8.0px;color:#3d3d3d;transform:scaleX(0.893);transform-origin:right 50%;">2,895,700</div>
<div class="t" style="right:274.5px;top:430.95px;font-size:8.0px;color:#3d3d3d;transform:scaleX(0.893);transform-origin:right 50%;">897,602</div>
<div class="t" style="right:221.89999999999998px;top:430.95px;font-size:8.0px;color:#333;transform:scaleX(0.893);transform-origin:right 50%;"><span style="display:inline-block;width:0;height:0;border-left:3.1px solid transparent;border-right:3.1px solid transparent;border-bottom:5.4px solid #000;margin-right:0.7px;vertical-align:0.6px;"></span>23.66%</div>
<div class="t" style="right:169.29999999999995px;top:430.95px;font-size:8.0px;color:#3d3d3d;transform:scaleX(0.893);transform-origin:right 50%;">2,598,650</div>
<div class="t" style="right:114.29999999999995px;top:430.95px;font-size:8.0px;color:#3d3d3d;transform:scaleX(0.893);transform-origin:right 50%;">1,194,652</div>
<div class="t" style="right:70.5px;top:430.95px;font-size:8.0px;color:#333;transform:scaleX(0.893);transform-origin:right 50%;"><span style="display:inline-block;width:0;height:0;border-left:3.1px solid transparent;border-right:3.1px solid transparent;border-bottom:5.4px solid #000;margin-right:0.7px;vertical-align:0.6px;"></span>31.49%</div>
<div class="b" style="left:81px;top:440.3px;width:800px;height:1px;background:#505050;"></div>
<div class="b" style="left:81px;top:441.5px;width:800px;height:9.6px;background:#ddebf7;"></div>
<div class="b" style="left:81px;top:451.1px;width:800px;height:1.6px;background:#333;"></div>
<div class="t" style="left:82.5px;top:443.7px;font-size:7.0px;color:#111;transform:scaleX(0.9);transform-origin:left 50%;font-weight:bold;">TOTAL REVENUE</div>
<div class="t" style="right:602.1px;top:442.5px;font-size:8.5px;color:#111;transform:scaleX(0.83);transform-origin:right 50%;font-weight:bold;">11,874,844</div>
<div class="t" style="right:548.0px;top:442.5px;font-size:8.5px;color:#111;transform:scaleX(0.83);transform-origin:right 50%;font-weight:bold;">9,646,050</div>
<div class="t" style="right:491.1px;top:442.5px;font-size:8.5px;color:#111;transform:scaleX(0.83);transform-origin:right 50%;font-weight:bold;">2,228,794</div>
<div class="t" style="right:439.9px;top:442.5px;font-size:8.5px;color:#111;transform:scaleX(0.83);transform-origin:right 50%;font-weight:bold;"><span style="display:inline-block;width:0;height:0;border-left:3.1px solid transparent;border-right:3.1px solid transparent;border-bottom:5.4px solid #000;margin-right:0.7px;vertical-align:0.6px;"></span>18.77%</div>
<div class="t" style="right:384.79999999999995px;top:442.5px;font-size:8.5px;color:#111;transform:scaleX(0.83);transform-origin:right 50%;font-weight:bold;">148,031,663</div>
<div class="t" style="right:331.5px;top:442.5px;font-size:8.5px;color:#111;transform:scaleX(0.83);transform-origin:right 50%;font-weight:bold;">129,173,700</div>
<div class="t" style="right:273.70000000000005px;top:442.5px;font-size:8.5px;color:#111;transform:scaleX(0.83);transform-origin:right 50%;font-weight:bold;">18,857,963</div>
<div class="t" style="right:221.10000000000002px;top:442.5px;font-size:8.5px;color:#111;transform:scaleX(0.83);transform-origin:right 50%;font-weight:bold;"><span style="display:inline-block;width:0;height:0;border-left:3.1px solid transparent;border-right:3.1px solid transparent;border-bottom:5.4px solid #000;margin-right:0.7px;vertical-align:0.6px;"></span>12.74%</div>
<div class="t" style="right:168.5px;top:442.5px;font-size:8.5px;color:#111;transform:scaleX(0.83);transform-origin:right 50%;font-weight:bold;">135,824,334</div>
<div class="t" style="right:113.5px;top:442.5px;font-size:8.5px;color:#111;transform:scaleX(0.83);transform-origin:right 50%;font-weight:bold;">12,207,329</div>
<div class="t" style="right:69.70000000000005px;top:442.5px;font-size:8.5px;color:#111;transform:scaleX(0.83);transform-origin:right 50%;font-weight:bold;"><span style="display:inline-block;width:0;height:0;border-left:3.1px solid transparent;border-right:3.1px solid transparent;border-bottom:5.4px solid #000;margin-right:0.7px;vertical-align:0.6px;"></span>8.25%</div>
<div class="t" style="left:297px;top:442.5px;font-size:8.5px;color:#111;transform:scaleX(0.86);transform-origin:left 50%;font-weight:bold;">$</div>
<div class="t" style="left:353.5px;top:442.5px;font-size:8.5px;color:#111;transform:scaleX(0.86);transform-origin:left 50%;font-weight:bold;">$</div>
<div class="t" style="left:407.5px;top:442.5px;font-size:8.5px;color:#111;transform:scaleX(0.86);transform-origin:left 50%;font-weight:bold;">$</div>
<div class="t" style="left:514.3px;top:442.5px;font-size:8.5px;color:#111;transform:scaleX(0.86);transform-origin:left 50%;font-weight:bold;">$</div>
<div class="t" style="left:571.7px;top:442.5px;font-size:8.5px;color:#111;transform:scaleX(0.86);transform-origin:left 50%;font-weight:bold;">$</div>
<div class="t" style="left:624.5px;top:442.5px;font-size:8.5px;color:#111;transform:scaleX(0.86);transform-origin:left 50%;font-weight:bold;">$</div>
<div class="t" style="left:733px;top:442.5px;font-size:8.5px;color:#111;transform:scaleX(0.86);transform-origin:left 50%;font-weight:bold;">$</div>
<div class="t" style="left:787.5px;top:442.5px;font-size:8.5px;color:#111;transform:scaleX(0.86);transform-origin:left 50%;font-weight:bold;">$</div>
<div class="t" style="left:82.5px;top:455.6px;font-size:7.4px;color:#3a3a3a;transform:scaleX(0.846);transform-origin:left 50%;">COST OF GOODS SOLD</div>
<div class="t" style="right:782.9px;top:466.8px;font-size:8.0px;color:#9a9a9a;transform:scaleX(0.81);transform-origin:right 50%;">4030</div>
<div class="t" style="left:190.3px;top:466.8px;font-size:8.0px;color:#2e2e2e;transform:scaleX(0.88);transform-origin:left 50%;">Merchandise Purchases</div>
<div class="t" style="right:602.9000000000001px;top:467.15px;font-size:8.0px;color:#3d3d3d;transform:scaleX(0.893);transform-origin:right 50%;">874,855</div>
<div class="t" style="right:548.8px;top:467.15px;font-size:8.0px;color:#3d3d3d;transform:scaleX(0.893);transform-origin:right 50%;">890,000</div>
<div class="t" style="right:489.40000000000003px;top:467.15px;font-size:8.0px;color:#3d3d3d;transform:scaleX(0.893);transform-origin:right 50%;">(15,145)</div>
<div class="t" style="right:440.7px;top:467.15px;font-size:8.0px;color:#e03a3a;transform:scaleX(0.893);transform-origin:right 50%;"><span style="display:inline-block;width:0;height:0;border-left:3.1px solid transparent;border-right:3.1px solid transparent;border-top:5.4px solid #e00;margin-right:0.7px;vertical-align:0.6px;"></span>1.73%</div>
<div class="t" style="right:385.5999999999999px;top:467.15px;font-size:8.0px;color:#3d3d3d;transform:scaleX(0.893);transform-origin:right 50%;">11,439,685</div>
<div class="t" style="right:332.29999999999995px;top:467.15px;font-size:8.0px;color:#3d3d3d;transform:scaleX(0.893);transform-origin:right 50%;">12,500,000</div>
<div class="t" style="right:272.0px;top:467.15px;font-size:8.0px;color:#3d3d3d;transform:scaleX(0.893);transform-origin:right 50%;">(1,060,315)</div>
<div class="t" style="right:221.89999999999998px;top:467.15px;font-size:8.0px;color:#e03a3a;transform:scaleX(0.893);transform-origin:right 50%;"><span style="display:inline-block;width:0;height:0;border-left:3.1px solid transparent;border-right:3.1px solid transparent;border-top:5.4px solid #e00;margin-right:0.7px;vertical-align:0.6px;"></span>9.27%</div>
<div class="t" style="right:169.29999999999995px;top:467.15px;font-size:8.0px;color:#3d3d3d;transform:scaleX(0.893);transform-origin:right 50%;">12,630,214</div>
<div class="t" style="right:111.79999999999995px;top:467.15px;font-size:8.0px;color:#3d3d3d;transform:scaleX(0.893);transform-origin:right 50%;">(1,190,529)</div>
<div class="t" style="right:70.5px;top:467.15px;font-size:8.0px;color:#e03a3a;transform:scaleX(0.893);transform-origin:right 50%;"><span style="display:inline-block;width:0;height:0;border-left:3.1px solid transparent;border-right:3.1px solid transparent;border-top:5.4px solid #e00;margin-right:0.7px;vertical-align:0.6px;"></span>10.41%</div>
<div class="t" style="right:782.9px;top:478.65000000000003px;font-size:8.0px;color:#9a9a9a;transform:scaleX(0.81);transform-origin:right 50%;">4040</div>
<div class="t" style="left:190.3px;top:478.65000000000003px;font-size:8.0px;color:#2e2e2e;transform:scaleX(0.88);transform-origin:left 50%;">Discounts Taken</div>
<div class="t" style="right:602.9000000000001px;top:479.0px;font-size:8.0px;color:#3d3d3d;transform:scaleX(0.893);transform-origin:right 50%;">36</div>
<div class="t" style="right:556.3px;top:479.6px;font-size:8.0px;color:#888;transform:scaleX(0.893);transform-origin:right 50%;">-</div>
<div class="t" style="right:491.90000000000003px;top:479.0px;font-size:8.0px;color:#3d3d3d;transform:scaleX(0.893);transform-origin:right 50%;">36</div>
<div class="t" style="right:440.7px;top:479.6px;font-size:8.0px;color:#888;transform:scaleX(0.893);transform-origin:right 50%;">-</div>
<div class="t" style="right:385.5999999999999px;top:479.0px;font-size:8.0px;color:#3d3d3d;transform:scaleX(0.893);transform-origin:right 50%;">13,498</div>
<div class="t" style="right:332.29999999999995px;top:479.0px;font-size:8.0px;color:#3d3d3d;transform:scaleX(0.893);transform-origin:right 50%;">12,000</div>
<div class="t" style="right:274.5px;top:479.0px;font-size:8.0px;color:#3d3d3d;transform:scaleX(0.893);transform-origin:right 50%;">1,498</div>
<div class="t" style="right:221.89999999999998px;top:479.0px;font-size:8.0px;color:#333;transform:scaleX(0.893);transform-origin:right 50%;"><span style="display:inline-block;width:0;height:0;border-left:3.1px solid transparent;border-right:3.1px solid transparent;border-bottom:5.4px solid #000;margin-right:0.7px;vertical-align:0.6px;"></span>11.09%</div>
<div class="t" style="right:169.29999999999995px;top:479.0px;font-size:8.0px;color:#3d3d3d;transform:scaleX(0.893);transform-origin:right 50%;">12,950</div>
<div class="t" style="right:114.29999999999995px;top:479.0px;font-size:8.0px;color:#3d3d3d;transform:scaleX(0.893);transform-origin:right 50%;">548</div>
<div class="t" style="right:70.5px;top:479.0px;font-size:8.0px;color:#333;transform:scaleX(0.893);transform-origin:right 50%;"><span style="display:inline-block;width:0;height:0;border-left:3.1px solid transparent;border-right:3.1px solid transparent;border-bottom:5.4px solid #000;margin-right:0.7px;vertical-align:0.6px;"></span>4.06%</div>
<div class="t" style="right:782.9px;top:490.5px;font-size:8.0px;color:#9a9a9a;transform:scaleX(0.81);transform-origin:right 50%;">4091</div>
<div class="t" style="left:190.3px;top:490.5px;font-size:8.0px;color:#2e2e2e;transform:scaleX(0.88);transform-origin:left 50%;">Federal Tax Expense</div>
<div class="t" style="right:610.4000000000001px;top:491.45px;font-size:8.0px;color:#888;transform:scaleX(0.893);transform-origin:right 50%;">-</div>
<div class="t" style="right:556.3px;top:491.45px;font-size:8.0px;color:#888;transform:scaleX(0.893);transform-origin:right 50%;">-</div>
<div class="t" style="right:499.40000000000003px;top:491.45px;font-size:8.0px;color:#888;transform:scaleX(0.893);transform-origin:right 50%;">-</div>
<div class="t" style="right:440.7px;top:491.45px;font-size:8.0px;color:#888;transform:scaleX(0.893);transform-origin:right 50%;">-</div>
<div class="t" style="right:385.5999999999999px;top:490.84999999999997px;font-size:8.0px;color:#3d3d3d;transform:scaleX(0.893);transform-origin:right 50%;">35,789</div>
<div class="t" style="right:332.29999999999995px;top:490.84999999999997px;font-size:8.0px;color:#3d3d3d;transform:scaleX(0.893);transform-origin:right 50%;">40,000</div>
<div class="t" style="right:272.0px;top:490.84999999999997px;font-size:8.0px;color:#3d3d3d;transform:scaleX(0.893);transform-origin:right 50%;">(4,211)</div>
<div class="t" style="right:221.89999999999998px;top:490.84999999999997px;font-size:8.0px;color:#e03a3a;transform:scaleX(0.893);transform-origin:right 50%;"><span style="display:inline-block;width:0;height:0;border-left:3.1px solid transparent;border-right:3.1px solid transparent;border-top:5.4px solid #e00;margin-right:0.7px;vertical-align:0.6px;"></span>11.77%</div>
<div class="t" style="right:169.29999999999995px;top:490.84999999999997px;font-size:8.0px;color:#3d3d3d;transform:scaleX(0.893);transform-origin:right 50%;">35,988</div>
<div class="t" style="right:111.79999999999995px;top:490.84999999999997px;font-size:8.0px;color:#3d3d3d;transform:scaleX(0.893);transform-origin:right 50%;">(199)</div>
<div class="t" style="right:70.5px;top:490.84999999999997px;font-size:8.0px;color:#e03a3a;transform:scaleX(0.893);transform-origin:right 50%;"><span style="display:inline-block;width:0;height:0;border-left:3.1px solid transparent;border-right:3.1px solid transparent;border-top:5.4px solid #e00;margin-right:0.7px;vertical-align:0.6px;"></span>0.56%</div>
<div class="b" style="left:923px;top:114px;width:13px;height:390px;background:#dadada;border-left:1px solid #c4c4c4;border-right:2px solid #e6e6e6;box-sizing:border-box;"></div>
<div class="b" style="left:925.5px;top:114.5px;width:9.5px;height:7.5px;background:#fff;border:1px solid #c8c8c8;box-sizing:border-box;"></div>
<svg style="left:928px;top:116.5px" width="5" height="3" viewBox="0 0 5 3"><polygon points="0,3 5,3 2.5,0" fill="#444"/></svg>
<div class="b" style="left:925.8px;top:122.5px;width:9px;height:52.5px;background:#fff;border:1px solid #c3c3c3;box-sizing:border-box;"></div>
<div class="b" style="left:926px;top:494px;width:9px;height:8.5px;background:#fff;border:1px solid #c8c8c8;box-sizing:border-box;"></div>
<svg style="left:928.5px;top:497.5px" width="4" height="2.5" viewBox="0 0 4 2.5"><polygon points="0,0 4,0 2,2.5" fill="#444"/></svg>
<div class="b" style="left:73px;top:503px;width:850px;height:16.5px;background:#e8e8e8;border-top:1px solid #d4d4d4;box-sizing:border-box;"></div>
<div class="b" style="left:923px;top:503px;width:13px;height:16.5px;background:#ececec;"></div>
<div class="t" style="left:90px;top:507.5px;font-size:7px;color:#c8c8c8;">&#8249;</div>
<div class="t" style="left:106px;top:507.5px;font-size:7px;color:#c8c8c8;">&#8250;</div>
<div class="b" style="left:132.5px;top:505px;width:1px;height:12px;background:#bdbdbd;"></div>
<div class="t" style="left:140px;top:506.0px;font-size:8.6px;color:#666;transform:scaleX(0.88);transform-origin:left 50%;">Live Report</div>
<div class="b" style="left:189px;top:503px;width:86px;height:16.5px;background:#fff;border-bottom:1.5px solid #217346;box-sizing:border-box;"></div>
<div class="b" style="left:188.5px;top:504px;width:0.8px;height:15px;background:#c8c8c8;"></div>
<div class="b" style="left:274.6px;top:504px;width:0.8px;height:15px;background:#c8c8c8;"></div>
<div class="t" style="left:-68px;width:600px;text-align:center;top:506.0px;font-size:8.6px;color:#217346;transform:scaleX(0.885);transform-origin:center 50%;font-weight:bold;">Published Example</div>
<div class="t" style="left:282px;top:506.0px;font-size:8.6px;color:#666;transform:scaleX(0.88);transform-origin:left 50%;">Info</div>
<div class="b" style="left:304px;top:505px;width:1px;height:12px;background:#bdbdbd;"></div>
<div class="t" style="left:573px;top:506px;font-size:8px;color:#bbb;">&#8942;</div>
<div class="b" style="left:583.5px;top:508px;width:8.5px;height:8px;background:#fff;border:1px solid #c3c3c3;box-sizing:border-box;"></div>
<svg style="left:586.5px;top:510.3px" width="2.5" height="3.5" viewBox="0 0 2.5 3.5"><polygon points="2.5,0 2.5,3.5 0,1.75" fill="#444"/></svg>
<div class="b" style="left:592px;top:508px;width:151px;height:8px;background:#fff;border:1px solid #c3c3c3;box-sizing:border-box;border-radius:1px;"></div>
<div class="b" style="left:914.5px;top:507.3px;width:8px;height:8.3px;background:#fff;border:1px solid #c8c8c8;box-sizing:border-box;"></div>
<svg style="left:917.5px;top:509.5px" width="2.5" height="4" viewBox="0 0 2.5 4"><polygon points="0,0 0,4 2.5,2" fill="#444"/></svg>
</div><div id="frameb"></div>
</body></html>
